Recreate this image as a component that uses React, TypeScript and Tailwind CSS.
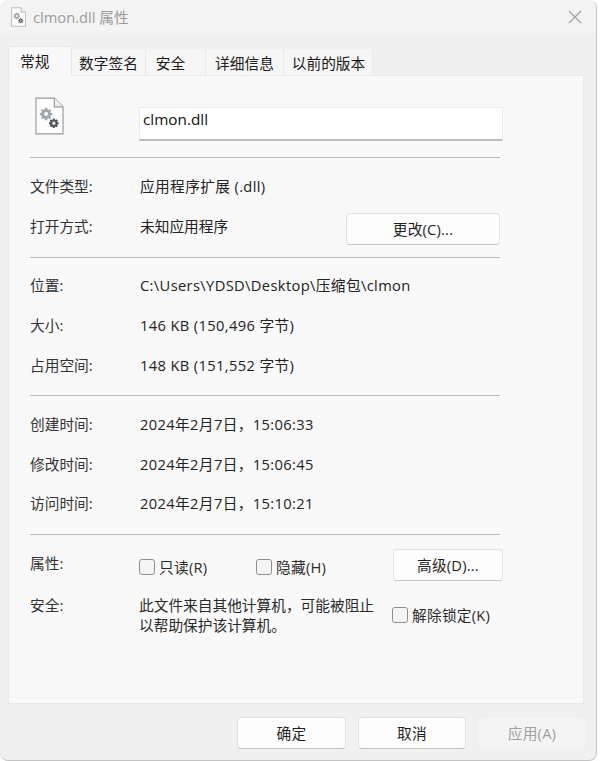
const font = { fontFamily: '"Open Sans", "Noto Sans CJK SC", sans-serif' };

function DocIcon({ size }: { size: "sm" | "lg" }) {
  const cls = size === "lg" ? "w-[29px] h-[38px]" : "w-[15px] h-[20px]";
  return (
    <svg viewBox="0 0 30 39" className={cls}>
      <path d="M1 1H20L29 10V38H1Z" fill="#fdfdfd" stroke="#9a9a9a" strokeWidth="1.2" />
      <path d="M20 1V10H29" fill="#f0f0f0" stroke="#9a9a9a" strokeWidth="1.2" />
      <g fill="none" stroke="#9fa7af" strokeWidth="3">
        <circle cx="11.5" cy="17.5" r="3.6" />
        <g strokeWidth="2.4" strokeLinecap="butt">
          <path d="M11.5 11v3M11.5 21v3M5 17.5h3M15 17.5h3M7 13l2 2M14 20l2 2M7 22l2-2M14 15l2-2" />
        </g>
      </g>
      <g fill="none" stroke="#4f5459" strokeWidth="2.2">
        <circle cx="19.5" cy="27" r="2.8" />
        <g strokeWidth="2">
          <path d="M19.5 22v2M19.5 30v2M14.500 27h2M22.500 27h2M16 23.500l1.500 1.500M21.500 29l1.500 1.500M16 30.500l1.500-1.500M21.500 25l1.500-1.500" />
        </g>
      </g>
    </svg>
  );
}

function Tab({ label, className, active }: { label: string; className: string; active?: boolean }) {
  if (active) {
    return (
      <div className={`${className} h-[30px] bg-[#f9f9f9] border border-b-0 border-[#e8e8e8] rounded-t-[2px] relative z-10 -mb-px pl-[11px] pt-[2px] text-[14.7px] leading-[24px] text-[#1a1a1a]`}>
        {label}
      </div>
    );
  }
  return (
    <div className={`${className} h-[26px] pt-[2px] bg-[#f6f6f6] border-r border-[#e9e9e9] flex items-center justify-center text-[14.7px] leading-[24px] text-[#1a1a1a]`}>
      {label}
    </div>
  );
}

function Hr({ className }: { className: string }) {
  return <div className={`w-[470px] h-px bg-[#b9b9b9] shrink-0 ${className}`} />;
}

function Row({ label, value, className, wide }: { label: string; value: string; className: string; wide?: boolean }) {
  return (
    <div className={`flex items-center h-[24px] pb-[2px] shrink-0 ${className}`}>
      <div className="w-[110px] text-[#333]">{label}</div>
      <div className={`text-[#222] ${wide ? "tracking-[0.36px]" : ""}`}>{value}</div>
    </div>
  );
}

function Btn({ label, className, disabled }: { label: string; className: string; disabled?: boolean }) {
  return (
    <div
      className={`flex items-center justify-center h-[32px] rounded-[4px] text-[14.7px] tracking-[0.2px] ${
        disabled
          ? "bg-[#f4f4f4] text-[#a0a0a0] border border-[#f0f0f0]"
          : "bg-[#fdfdfd] text-[#1f1f1f] border border-[#e2e2e2] border-b-[#c4c4c4]"
      } ${className}`}
    >
      {label}
    </div>
  );
}

function Check({ label, className }: { label: string; className?: string }) {
  return (
    <div className={`flex items-center gap-[4px] ${className ?? ""}`}>
      <div className="w-[16px] h-[16px] rounded-[3px] border border-[#8f8f8f] bg-[#f5f5f5]" />
      <span className="text-[#2a2a2a] tracking-[0.25px]">{label}</span>
    </div>
  );
}

export default function App() {
  return (
    <div className="w-[600px] h-[761px] bg-white overflow-hidden" style={font}>
      <div className="w-[597px] h-[761px] bg-[#f0f0f0] border-r border-b border-[#c4c4c4] rounded-[8px] flex flex-col">
        <div className="h-[34px] bg-[#f3f3f3] rounded-t-[8px] flex items-center pl-[11px] pr-[14px] shrink-0">
          <DocIcon size="sm" />
          <span className="ml-[7px] text-[14.7px] text-[#9b9b9b]">clmon.dll 属性</span>
          <svg viewBox="0 0 14 14" className="ml-auto w-[14px] h-[14px]">
            <path d="M1 1L13 13M13 1L1 13" stroke="#a0a0a0" strokeWidth="1.2" fill="none" />
          </svg>
        </div>

        <div className="ml-[8px] mt-[12px] flex items-end h-[29px] shrink-0">
          <Tab label="常规" className="w-[64px]" active />
          <Tab label="数字签名" className="w-[74px]" />
          <Tab label="安全" className="w-[60px] pr-[10px]" />
          <Tab label="详细信息" className="w-[78px]" />
          <Tab label="以前的版本" className="w-[89px] pl-[1px]" />
        </div>

        <div className="ml-[8px] w-[576px] h-[629px] bg-[#f9f9f9] border border-[#e9e9e9] pl-[21px] text-[14.7px] shrink-0 flex flex-col">
          <div className="flex h-[34px] mt-[21px] shrink-0">
            <div className="ml-[5px] w-[29px]">
              <DocIcon size="lg" />
            </div>
            <div className="ml-[75px] mt-[10px] w-[364px] h-[34px] bg-white border border-[#ececec] border-b-2 border-b-[#bdbdbd] pl-[3px] text-[15.3px] leading-[22px] text-[#111]">
              clmon.dll
            </div>
          </div>

          <Hr className="mt-[26px]" />
          <Row label="文件类型:" value="应用程序扩展 (.dll)" className="mt-[17px]" wide />
          <div className="flex items-center h-[32px] mt-[14px] w-[470px] shrink-0">
            <div className="w-[110px] text-[#333] -mt-[5px]">打开方式:</div>
            <div className="text-[#222] -mt-[5px]">未知应用程序</div>
            <Btn label="更改(C)..." className="ml-auto w-[154px]" />
          </div>
          <Hr className="mt-[12px]" />
          <Row label="位置:" value="C:\Users\YDSD\Desktop\压缩包\clmon" className="mt-[16px]" wide />
          <Row label="大小:" value="146 KB (150,496 字节)" className="mt-[16px]" wide />
          <Row label="占用空间:" value="148 KB (151,552 字节)" className="mt-[16px]" wide />
          <Hr className="mt-[17px]" />
          <Row label="创建时间:" value="2024年2月7日，15:06:33" className="mt-[17px]" wide />
          <Row label="修改时间:" value="2024年2月7日，15:06:45" className="mt-[16px]" wide />
          <Row label="访问时间:" value="2024年2月7日，15:10:21" className="mt-[15px]" wide />
          <Hr className="mt-[18px]" />

          <div className="flex items-center h-[32px] mt-[14px] w-[473px] shrink-0">
            <div className="w-[109px] text-[#333] -mt-[4px]">属性:</div>
            <Check label="只读(R)" className="w-[117px] mt-[4px]" />
            <Check label="隐藏(H)" className="mt-[4px]" />
            <Btn label="高级(D)..." className="ml-auto w-[110px]" />
          </div>

          <div className="flex mt-[14px] shrink-0">
            <div className="w-[109px] text-[#333] leading-[20px]">安全:</div>
            <div className="w-[253px] text-[#2a2a2a] leading-[20px]">
              此文件来自其他计算机，可能被阻止
              <br />
              以帮助保护该计算机。
            </div>
            <Check label="解除锁定(K)" className="mt-[8px] h-[24px]" />
          </div>
        </div>

        <div className="flex justify-end gap-[12px] mt-[13px] pr-[10px]">
          <Btn label="确定" className="w-[109px]" />
          <Btn label="取消" className="w-[108px]" />
          <Btn label="应用(A)" className="w-[108px]" disabled />
        </div>
      </div>
    </div>
  );
}
